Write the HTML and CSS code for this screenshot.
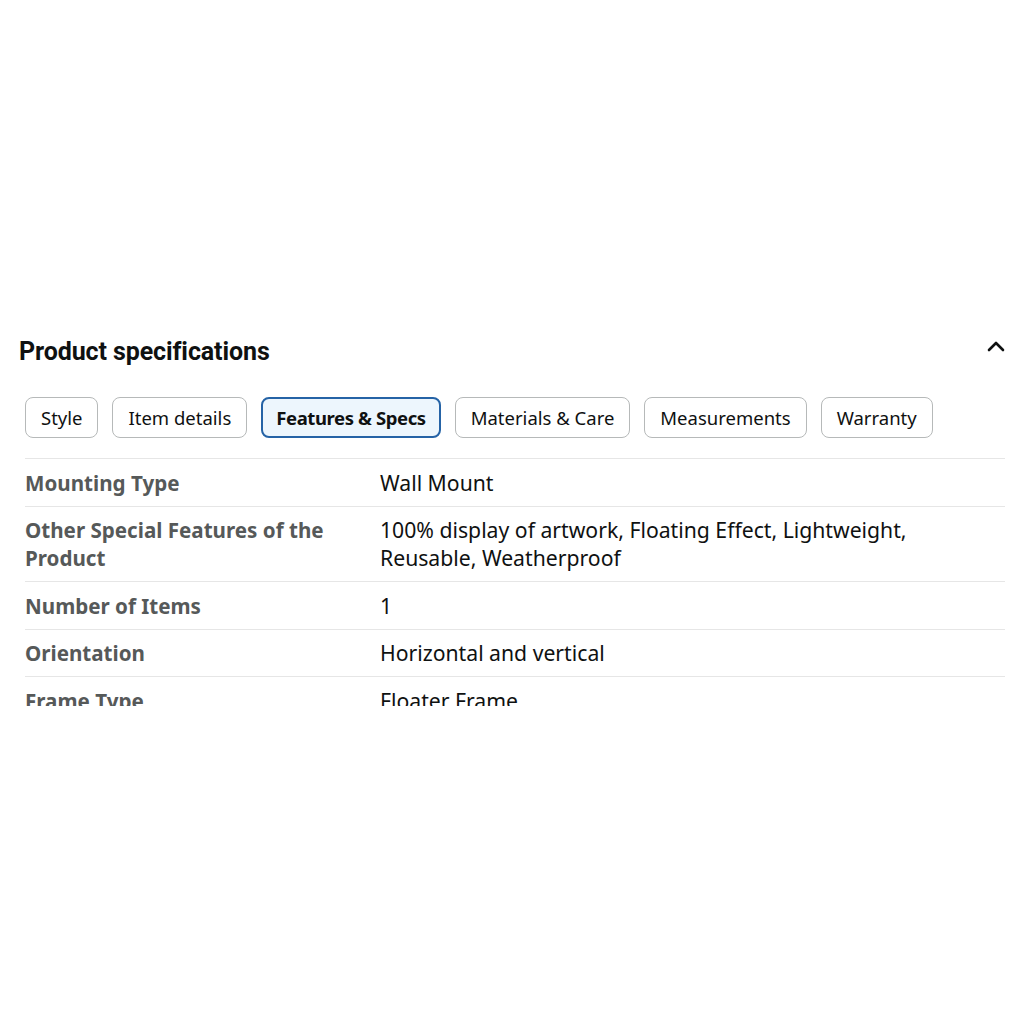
FILE: index.html
```html
<!DOCTYPE html>
<html>
<head>
<meta charset="utf-8">
<link rel="stylesheet" href="styles.css">
</head>
<body>
<div class="page">
  <section class="specs">
    <div class="specs-header">
      <h2 class="specs-title">Product specifications</h2>
      <svg class="chevron" width="18" height="12" viewBox="0 0 18 12"><path d="M2 10 L9 3 L16 10" fill="none" stroke="#0f1111" stroke-width="2.6" stroke-linecap="round" stroke-linejoin="round"/></svg>
    </div>
    <div class="tabs">
      <span class="tab">Style</span>
      <span class="tab">Item details</span>
      <span class="tab tab-active">Features &amp; Specs</span>
      <span class="tab">Materials &amp; Care</span>
      <span class="tab">Measurements</span>
      <span class="tab">Warranty</span>
    </div>
    <div class="table-clip">
      <div class="row"><div class="label">Mounting Type</div><div class="value">Wall Mount</div></div>
      <div class="row"><div class="label">Other Special Features of the Product</div><div class="value">100% display of artwork, Floating Effect, Lightweight, Reusable, Weatherproof</div></div>
      <div class="row"><div class="label">Number of Items</div><div class="value">1</div></div>
      <div class="row"><div class="label">Orientation</div><div class="value">Horizontal and vertical</div></div>
      <div class="row"><div class="label">Frame Type</div><div class="value">Floater Frame</div></div>
    </div>
  </section>
</div>
</body>
</html>
```
FILE: styles.css
```css
html, body {
  margin: 0;
  padding: 0;
  background: #ffffff;
}
.page {
  width: 1024px;
  height: 1024px;
  padding-top: 334px;
  box-sizing: border-box;
  font-family: "Noto Sans", "Open Sans", sans-serif;
  color: #0f1111;
}
.specs {
  padding: 0 19px 0 19px;
}
.specs-header {
  display: flex;
  justify-content: space-between;
  align-items: flex-start;
}
.specs-title {
  margin: 0;
  font-family: Roboto, "Noto Sans", sans-serif;
  font-weight: 700;
  font-size: 25px;
  line-height: 36px;
  letter-spacing: -0.1px;
  color: #0f1111;
}
.chevron {
  margin-top: 6px;
  margin-right: 0;
}
.tabs {
  display: flex;
  gap: 14px;
  margin-top: 27px;
  padding-left: 6px;
}
.tab {
  display: inline-flex;
  align-items: center;
  height: 41px;
  box-sizing: border-box;
  padding: 0 15px;
  border: 1px solid #b6b9b9;
  border-radius: 8px;
  font-size: 18.5px;
  color: #0f1111;
  white-space: nowrap;
}
.tab-active {
  border: 2.5px solid #2563a6;
  background: #edf6fd;
  font-weight: 700;
  letter-spacing: -0.4px;
  padding: 0 13px;
}
.table-clip {
  margin: 20px 0 0 6px;
  height: 247px;
  overflow: hidden;
  border-top: 1px solid #e6e6e6;
}
.row {
  display: grid;
  grid-template-columns: 355px 1fr;
  border-bottom: 1px solid #e6e6e6;
  padding: 9.5px 0 9px 0;
  line-height: 28px;
}
.label {
  font-weight: 700;
  font-size: 20.6px;
  color: #565959;
  padding-right: 20px;
}
.value {
  font-size: 21.2px;
  color: #0f1111;
  padding-right: 60px;
}
```
